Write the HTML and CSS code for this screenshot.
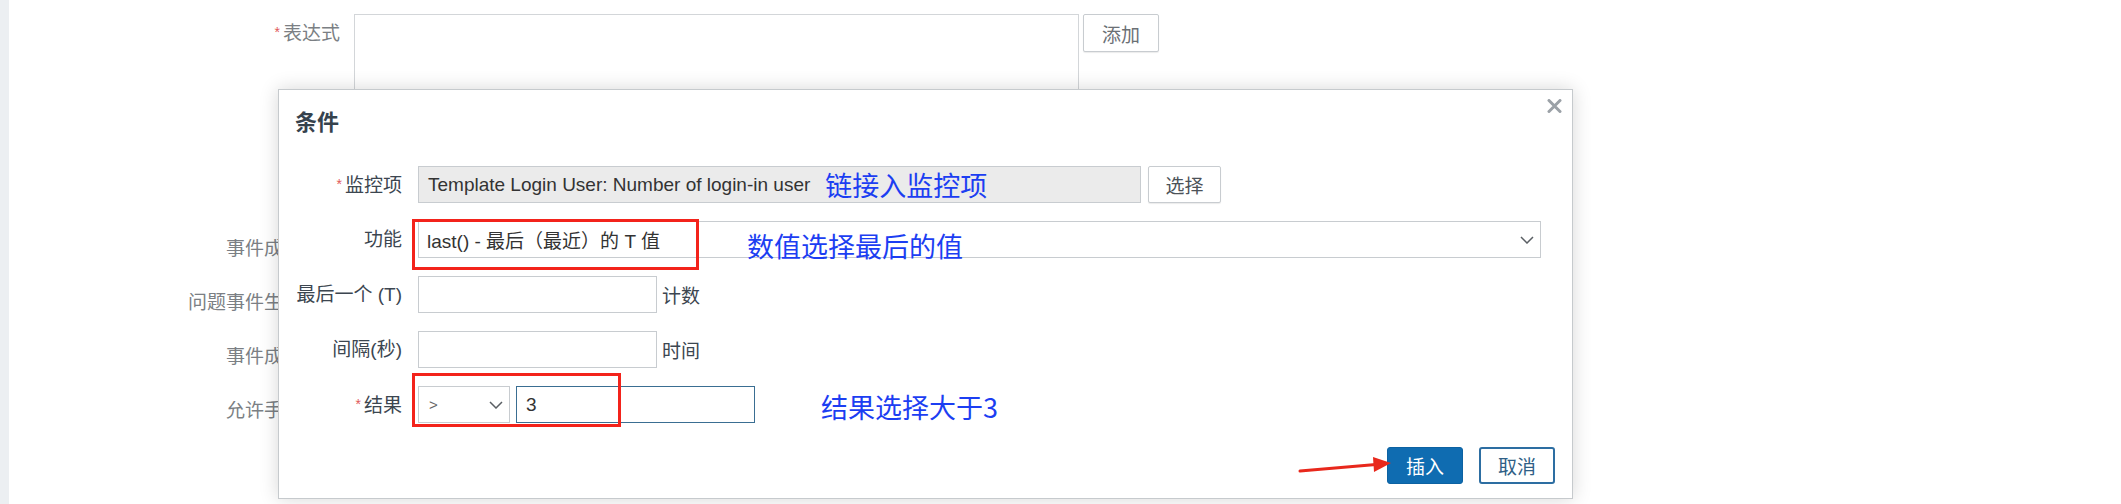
FILE: index.html
```html
<!DOCTYPE html>
<html lang="zh-CN">
<head>
    <meta charset="UTF-8">
    <meta name="viewport" content="width=device-width, initial-scale=1.0">
    <title>触发器 - 条件</title>
    <link rel="stylesheet" href="styles.css">
</head>
<body>
    <div class="page">
        <div class="side-strip"></div>
        <div class="trigger-form">
            <div class="expr-row">
                <label class="bg-label"><span class="req">*</span>表达式</label>
                <div class="expr-box"></div>
                <button class="btn-plain btn-add">添加</button>
            </div>
            <!-- rows below are hidden under the dialog, only their start shows -->
            <div class="bg-row"><div class="bg-clip"><label class="bg-label">事件成功迭代</label></div></div>
            <div class="bg-row"><div class="bg-clip"><label class="bg-label">问题事件生成模式</label></div></div>
            <div class="bg-row"><div class="bg-clip"><label class="bg-label">事件成功关闭</label></div></div>
            <div class="bg-row"><div class="bg-clip"><label class="bg-label">允许手动关闭</label></div></div>
        </div>
    </div>

    <div class="dialog">
        <h3 class="dialog-title">条件</h3>
        <span class="dialog-close">
            <svg width="15" height="14" viewBox="0 0 15 14"><path d="M2 1.5 L13 12.5 M13 1.5 L2 12.5" stroke="#9ba1a7" stroke-width="3" stroke-linecap="round"/></svg>
        </span>

        <div class="cond-form">
            <label class="cond-label"><span class="req">*</span>监控项</label>
            <div class="field">
                <div class="input input-readonly input-item">
                    Template Login User: Number of login-in user
                    <span class="note">链接入监控项</span>
                </div>
                <button class="btn-plain btn-select">选择</button>
            </div>

            <label class="cond-label">功能</label>
            <div class="field">
                <div class="input select select-func">
                    <span>last() - 最后（最近）的 T 值</span>
                    <span class="note note-low">数值选择最后的值</span>
                    <svg class="chevron" width="14" height="8" viewBox="0 0 14 8"><path d="M1 1 L7 7 L13 1" fill="none" stroke="#5a5f64" stroke-width="1.5"/></svg>
                </div>
                <div class="mark mark-func"></div>
            </div>

            <label class="cond-label">最后一个 (T)</label>
            <div class="field">
                <div class="input input-short"></div>
                <span class="unit">计数</span>
            </div>

            <label class="cond-label">间隔(秒)</label>
            <div class="field">
                <div class="input input-short"></div>
                <span class="unit">时间</span>
            </div>

            <label class="cond-label"><span class="req">*</span>结果</label>
            <div class="field">
                <div class="input select select-op">
                    <span class="op">&gt;</span>
                    <svg class="chevron" width="14" height="8" viewBox="0 0 14 8"><path d="M1 1 L7 7 L13 1" fill="none" stroke="#5a5f64" stroke-width="1.5"/></svg>
                </div>
                <div class="input input-short input-focus">3</div>
                <span class="note note-result">结果选择大于3</span>
                <div class="mark mark-result"></div>
            </div>
        </div>

        <div class="dialog-footer">
            <svg class="arrow" width="96" height="21" viewBox="0 0 96 21">
                <path d="M4 16 L80 9.5" stroke="#e8281c" stroke-width="3" stroke-linecap="round"/>
                <polygon points="95,8 77,2 78,17" fill="#e8281c"/>
            </svg>
            <button class="btn-primary">插入</button>
            <button class="btn-outline">取消</button>
        </div>
    </div>
</body>
</html>
```

FILE: styles.css
```css
body {
    margin: 0;
    background: #ffffff;
    font-family: "Liberation Sans", Arial, "Noto Sans CJK SC", sans-serif;
    font-size: 19px;
    color: #3c4650;
    overflow: hidden;
}
.page {
    display: flex;
    height: 504px;
}
.side-strip {
    width: 9px;
    background: #eceff2;
}
.trigger-form {
    padding-top: 14px;
}
.bg-label {
    display: block;
    width: 331px;
    flex-shrink: 0;
    text-align: right;
    color: #7b7f84;
    line-height: 19px;
}
.req {
    color: #e0585a;
    font-size: 14px;
    margin-right: 3px;
    vertical-align: 3px;
}
.expr-row {
    display: flex;
    align-items: flex-start;
    margin-bottom: 17px;
}
.expr-row .bg-label {
    padding-top: 9px;
    margin-right: 14px;
}
.expr-box {
    width: 725px;
    height: 190px;
    box-sizing: border-box;
    border: 1px solid #d3d6d9;
}
.bg-row {
    height: 54px;
    display: flex;
    align-items: center;
}
.bg-clip {
    width: 269px;
    overflow: hidden;
}
.btn-plain {
    font-family: inherit;
    font-size: 19px;
    background: #fff;
    border: 1px solid #c8ccd0;
    border-radius: 2px;
    box-shadow: 0 1px 1px rgba(0, 0, 0, 0.08);
    color: #4c5258;
    padding: 0;
}
.btn-add {
    width: 76px;
    height: 38px;
    margin-left: 4px;
    color: #6b7075;
}

/* condition dialog */
.dialog {
    position: absolute;
    left: 278px;
    top: 89px;
    width: 1295px;
    box-sizing: border-box;
    background: #fff;
    border: 1px solid #c6cacd;
    box-shadow: 0 0 18px rgba(0, 0, 0, 0.16);
    padding: 20px 17px 14px 16px;
}
.dialog-title {
    margin: 0;
    font-size: 22px;
    line-height: 26px;
    font-weight: bold;
    color: #36424d;
}
.dialog-close {
    position: absolute;
    right: 10px;
    top: 9px;
    width: 15px;
    height: 14px;
}
.dialog-close svg {
    display: block;
}
.cond-form {
    margin-top: 30px;
    display: grid;
    grid-template-columns: 107px auto;
    column-gap: 16px;
    row-gap: 18px;
    align-items: center;
}
.cond-label {
    text-align: right;
    white-space: nowrap;
    line-height: 19px;
}
.field {
    position: relative;
    display: flex;
    align-items: center;
    height: 37px;
}
.input {
    height: 37px;
    box-sizing: border-box;
    border: 1px solid #c8ccd0;
    background: #fff;
    display: flex;
    align-items: center;
    padding: 0 9px;
    color: #333;
    white-space: nowrap;
}
.input-readonly {
    background: #ebebeb;
}
.input-item {
    width: 723px;
}
.btn-select {
    width: 73px;
    height: 37px;
    margin-left: 7px;
}
.select {
    position: relative;
    padding-left: 8px;
}
.select-func {
    width: 1123px;
}
.select .chevron {
    position: absolute;
    right: 6px;
    top: 14px;
}
.select-op {
    width: 92px;
    margin-right: 6px;
}
.op {
    font-size: 15px;
    color: #666;
    margin-left: 2px;
}
.input-short {
    width: 239px;
}
.input-focus {
    border-color: #3a6e92;
}
.unit {
    margin-left: 5px;
}
.note {
    font-family: "Noto Sans CJK SC", sans-serif;
    font-size: 27px;
    line-height: 1;
    color: #1c3ef2;
    margin-left: 15px;
}
.note-low {
    margin-left: 87px;
    margin-top: 12px;
}
.note-result {
    margin-left: 66px;
    margin-top: 4px;
}
.mark {
    position: absolute;
    box-sizing: border-box;
    border: 3px solid #f3231b;
}
.mark-func {
    left: -6px;
    top: -2px;
    width: 287px;
    height: 51px;
}
.mark-result {
    left: -6px;
    top: -13px;
    width: 209px;
    height: 54px;
}
.dialog-footer {
    position: relative;
    margin-top: 24px;
    display: flex;
    justify-content: flex-end;
    gap: 16px;
}
.btn-primary,
.btn-outline {
    width: 76px;
    height: 37px;
    font-family: inherit;
    font-size: 19px;
    border-radius: 3px;
    padding: 0;
}
.btn-primary {
    background: #0f6cb1;
    border: 1px solid #0d62a2;
    color: #fff;
}
.btn-outline {
    background: #fff;
    border: 2px solid #2d6ea2;
    color: #2f5f86;
}
.arrow {
    position: absolute;
    right: 163px;
    top: 8px;
}
```
